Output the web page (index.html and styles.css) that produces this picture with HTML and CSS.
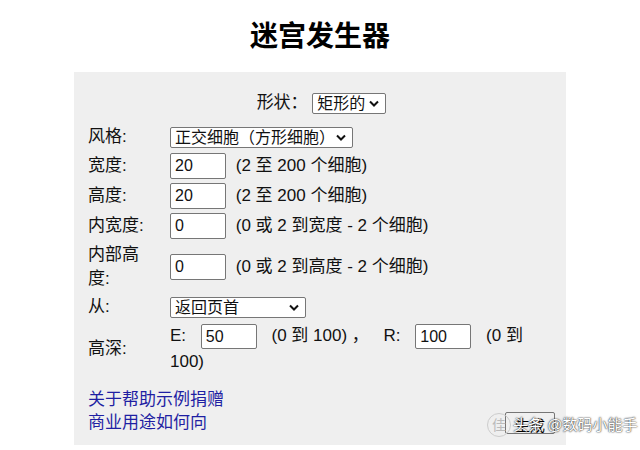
FILE: index.html
```html
<!DOCTYPE html>
<html lang="zh">
<head>
    <meta charset="UTF-8">
    <title>迷宫发生器</title>
    <link rel="stylesheet" href="styles.css">
</head>
<body>
    <h1 class="title">迷宫发生器</h1>

    <div class="panel">
        <div class="shape-row">
            <span>形状：</span>
            <select class="sel sel-shape">
                <option>矩形的</option>
            </select>
        </div>

        <table class="form">
            <tr class="row-select">
                <td class="label">风格:</td>
                <td>
                    <select class="sel sel-style">
                        <option>正交细胞（方形细胞）</option>
                    </select>
                </td>
            </tr>
            <tr>
                <td class="label">宽度:</td>
                <td><input class="num" type="text" value="20"> <span class="hint">(2 至 200 个细胞)</span></td>
            </tr>
            <tr>
                <td class="label">高度:</td>
                <td><input class="num" type="text" value="20"> <span class="hint">(2 至 200 个细胞)</span></td>
            </tr>
            <tr>
                <td class="label">内宽度:</td>
                <td><input class="num" type="text" value="0"> <span class="hint">(0 或 2 到宽度 - 2 个细胞)</span></td>
            </tr>
            <tr>
                <td class="label">内部高度:</td>
                <td><input class="num" type="text" value="0"> <span class="hint">(0 或 2 到高度 - 2 个细胞)</span></td>
            </tr>
            <tr class="row-select">
                <td class="label">从:</td>
                <td>
                    <select class="sel sel-from">
                        <option>返回页首</option>
                    </select>
                </td>
            </tr>
            <tr>
                <td class="label">高深:</td>
                <td class="depth">
                    <span>E:</span> <input class="num" type="text" value="50"> <span class="gap">(0 到 100) ，</span>
                    <span>R:</span> <input class="num" type="text" value="100"> <span>(0 到</span> <span>100)</span>
                </td>
            </tr>
        </table>

        <div class="footer">
            <button class="go">生成</button>
            <a href="#" class="link">关于帮助示例捐赠</a>
            <a href="#" class="link">商业用途如何向</a>
        </div>
    </div>

    <div class="watermark"><span class="wm-logo">佳</span>头条 @数码小能手</div>
</body>
</html>
```

FILE: styles.css
```css
body {
    margin: 0;
    background: #fff;
    font-family: "Liberation Sans", "Noto Sans CJK SC", sans-serif;
    font-size: 17px;
    color: #111;
    position: relative;
    height: 450px;
    overflow: hidden;
}
.title {
    margin: 0;
    padding-top: 20px;
    height: 72px;
    box-sizing: border-box;
    text-align: center;
    font-size: 28px;
    line-height: 34px;
    font-weight: bold;
    color: #000;
}
.panel {
    margin: 0 74px;
    height: 373px;
    box-sizing: border-box;
    background: #efefef;
    padding: 19px 11px 0 14px;
}
.shape-row {
    text-align: center;
    height: 24px;
    line-height: 24px;
    margin-bottom: 8px;
}
.sel {
    -webkit-appearance: none;
    appearance: none;
    height: 21px;
    font-family: inherit;
    font-size: 16px;
    color: #111;
    background: #fff url("data:image/svg+xml;utf8,<svg xmlns='http://www.w3.org/2000/svg' width='10' height='7' viewBox='0 0 10 7'><path d='M1 1.5 L5 5.5 L9 1.5' fill='none' stroke='%23111' stroke-width='2'/></svg>") no-repeat right 6px center;
    border: 1px solid #767676;
    border-radius: 2px;
    padding: 0 0 0 4px;
    line-height: 19px;
    vertical-align: middle;
}
.sel-shape {
    width: 74px;
}
.sel-style {
    width: 183px;
}
.sel-from {
    width: 136px;
}
.form {
    border-collapse: collapse;
}
.form td {
    padding: 2px 0;
    vertical-align: middle;
    line-height: 24px;
}
.form .label {
    width: 68px;
    padding-right: 14px;
}
.num {
    width: 56px;
    height: 26px;
    box-sizing: border-box;
    border: 1px solid #767676;
    border-radius: 2px;
    padding: 0 4px;
    font-family: inherit;
    font-size: 16px;
    color: #111;
    vertical-align: middle;
    margin-right: 5px;
}
.hint {
    vertical-align: middle;
}
.form .depth {
    line-height: 25px;
}
.depth .num {
    height: 25px;
    margin: 0 10px 0 10px;
}
.gap {
    margin-right: 10px;
}
.footer {
    margin-top: 12px;
}
.link {
    display: block;
    color: #1f1fa3;
    text-decoration: none;
    line-height: 23px;
}
.go {
    float: right;
    margin-top: 24px;
    width: 50px;
    height: 22px;
    font-family: inherit;
    font-size: 15px;
    background: #f0f0f0;
    border: 1px solid #767676;
    border-radius: 2px;
}
.watermark {
    position: absolute;
    left: 487px;
    top: 413px;
    font-size: 15px;
    color: #fff;
    text-shadow: 0 0 2px #333, 0 0 1px #333;
    white-space: nowrap;
}
.wm-logo {
    display: inline-block;
    width: 22px;
    height: 22px;
    border-radius: 50%;
    border: 1px solid #ccc;
    color: #bbb;
    text-shadow: none;
    text-align: center;
    line-height: 22px;
    font-size: 14px;
    margin-right: 2px;
}
```
